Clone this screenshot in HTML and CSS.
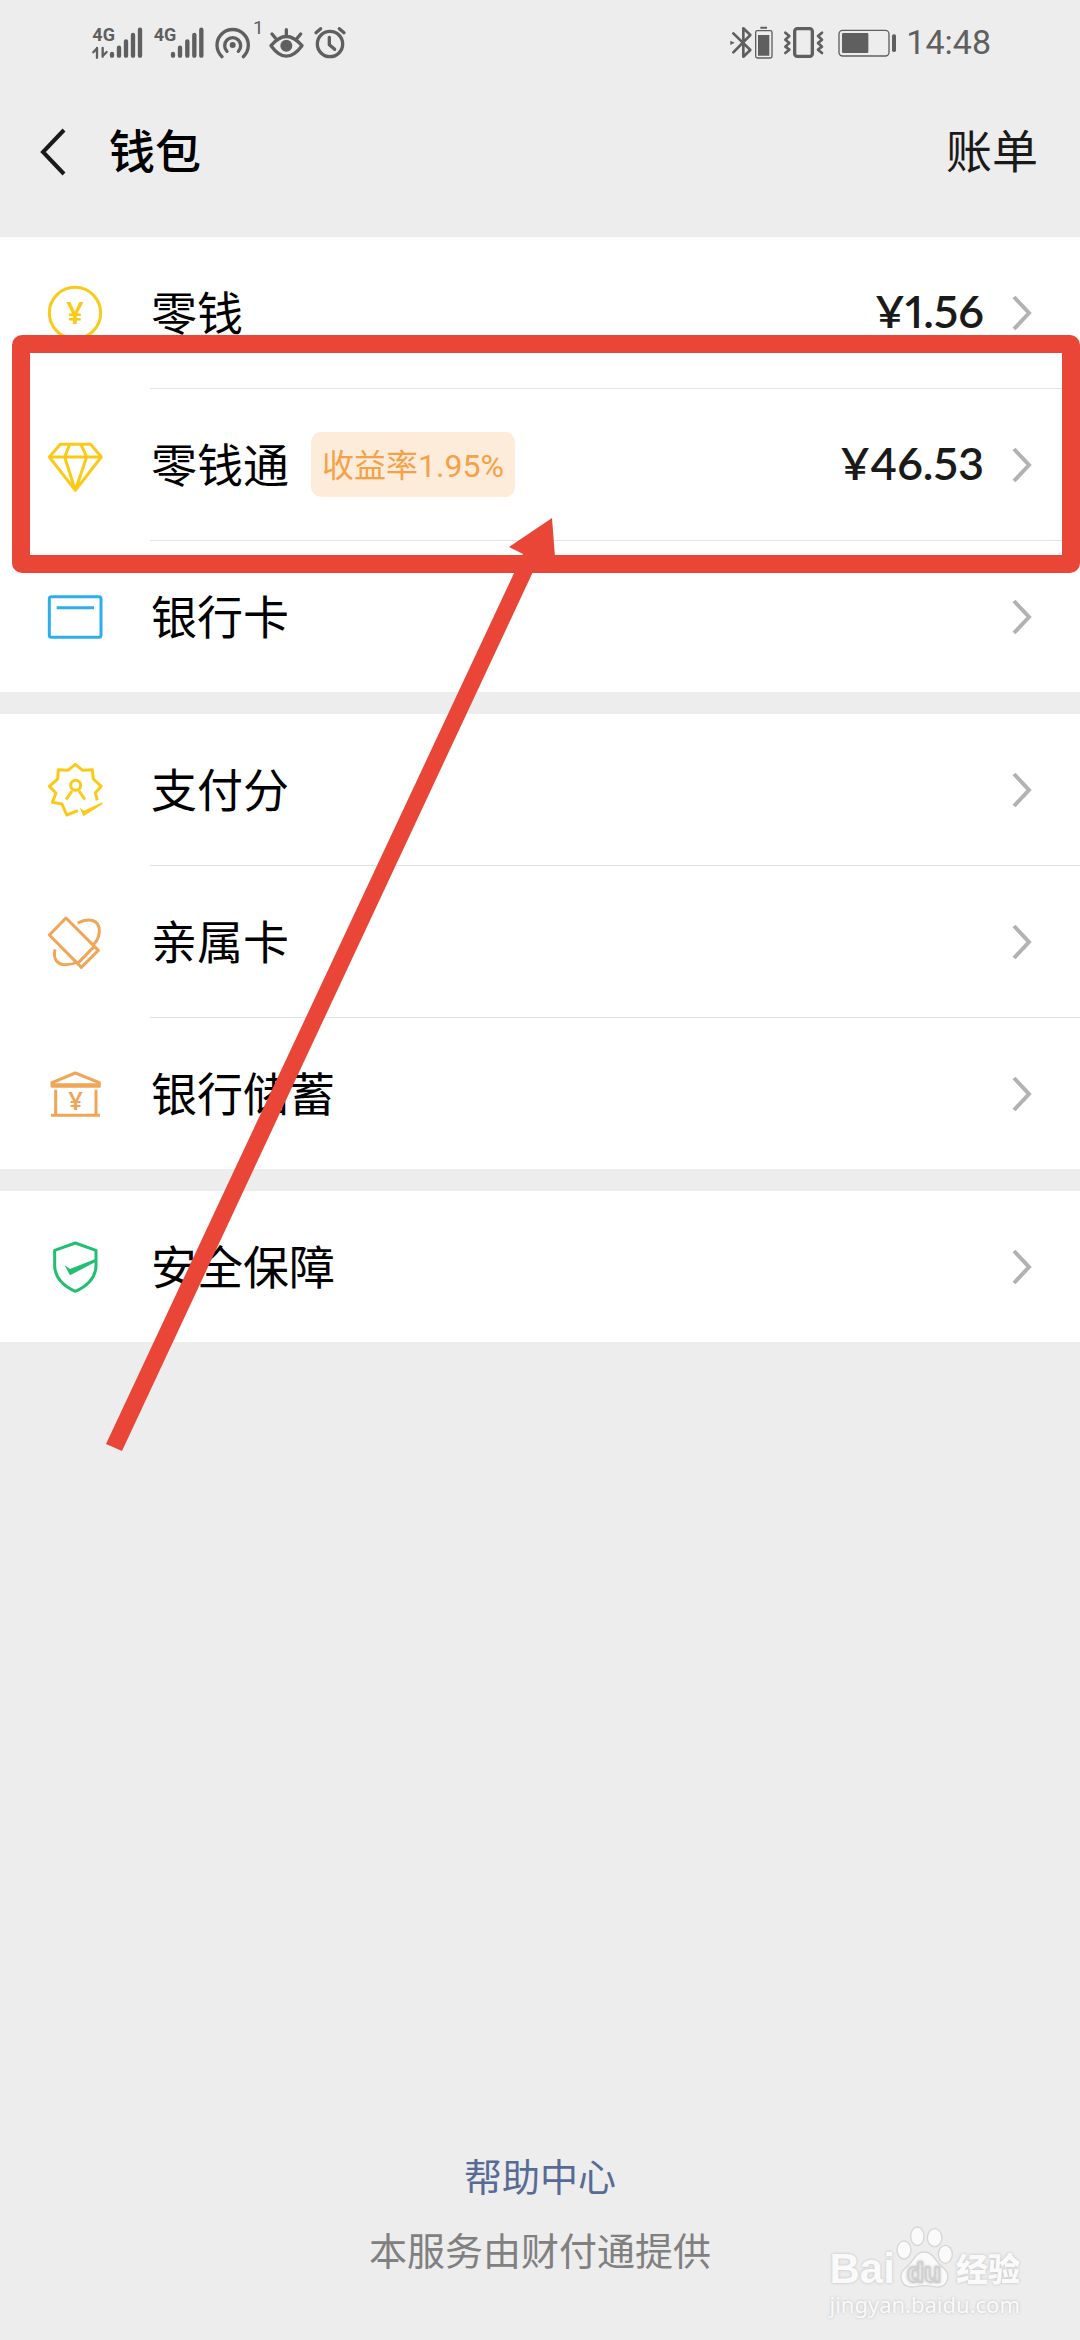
FILE: index.html
```html
<!DOCTYPE html>
<html lang="zh-CN">
<head>
<meta charset="utf-8">
<meta name="viewport" content="width=device-width, initial-scale=1">
<title>钱包</title>
<link rel="stylesheet" href="styles.css">
</head>
<body>
<div class="screen">
  <div class="status-bar">
    <div class="status-group">
      <svg class="status-icon" width="52" height="35" viewBox="36 43 156 105">
        <text class="net" x="37" y="92">4G</text>
        <path class="line" stroke-width="7" d="M51 112V141M51 113L40 125M68 112V138M68 136L80 124"/>
        <path class="line" stroke-width="13" d="M96 130V135M117 111V135M138 92V135M159 73V135M180 57V135"/>
      </svg>
      <svg class="status-icon" width="52" height="35" viewBox="216 43 156 105">
        <text class="net" x="221" y="92">4G</text>
        <path class="line" stroke-width="13" d="M279 130V135M300 111V135M322 92V135M343 73V135M364 57V135"/>
      </svg>
      <svg class="status-icon" width="50" height="35" viewBox="396 43 150 105">
        <circle cx="458" cy="103" r="9"/>
        <path class="line" stroke-width="10" d="M441 122A24 24 0 1 1 475 122M426 138A47 47 0 1 1 490 138"/>
        <text class="count" x="519" y="69">1</text>
      </svg>
      <svg class="status-icon" width="34" height="35" viewBox="570 43 102 105">
        <path class="line" stroke-width="10" d="M573 105Q619 50 666 105Q619 168 573 105ZM619 57V74M576 70L586 82M662 70L652 82"/>
        <circle cx="619" cy="105" r="18"/>
      </svg>
      <svg class="status-icon" width="36" height="35" viewBox="696 43 108 105">
        <circle class="line" stroke-width="10" cx="750" cy="100" r="38"/>
        <path class="line" stroke-width="10" d="M748 80V102L764 116M708 66L722 54M778 54L792 66"/>
      </svg>
    </div>
    <div class="status-group">
      <svg class="status-icon" width="45" height="35" viewBox="24 43 135 105">
        <path class="line" stroke-width="8" d="M37 68L88 118L67 138V53L88 73L37 125"/>
        <path d="M28 90L41 96L28 103ZM118 48H138V54H118ZM111 73H145V135H111Z"/>
        <rect class="line" stroke-width="4" x="104" y="60" width="49" height="82" rx="5"/>
      </svg>
      <svg class="status-icon" width="48" height="35" viewBox="183 43 144 105">
        <rect class="line" stroke-width="10" x="221" y="54" width="53" height="83" rx="8"/>
        <path class="line" stroke-width="8" d="M193 66L205 76L193 87L205 97L193 108L205 117L193 127M303 66L291 76L303 87L291 97L303 108L291 117L303 127"/>
      </svg>
      <svg class="status-icon" width="60" height="35" viewBox="350 43 180 105">
        <rect class="line" stroke-width="4" x="353" y="59" width="150" height="77" rx="11"/>
        <rect x="362" y="67" width="79" height="60" rx="3"/>
        <rect x="512" y="71" width="12" height="53" rx="5"/>
      </svg>
      <time class="clock">14:48</time>
    </div>
  </div>

  <header class="nav">
    <button class="back" type="button" aria-label="返回">
      <svg width="26" height="48" viewBox="0 0 26 48"><path d="M24 2L3 24L24 46"/></svg>
    </button>
    <h1 class="title">钱包</h1>
    <a class="bill" href="#">账单</a>
  </header>

  <main class="groups">
    <section class="group">
      <a class="row" href="#">
        <svg class="icon gold" viewBox="0 0 162 162">
          <circle cx="81" cy="81" r="77"/>
          <text class="yen" x="81" y="115" font-size="92">¥</text>
        </svg>
        <span class="label">零钱</span>
        <span class="amount">¥1.56</span>
        <svg class="chevron" viewBox="0 0 20 36"><path d="M2 2L17 18L2 34"/></svg>
      </a>
      <a class="row" href="#">
        <svg class="icon gold" viewBox="0 0 162 162">
          <path d="M37 19H128L160 57L82 157L4 57ZM4 57H160M65 19L50 57L82 157L116 57L99 19"/>
        </svg>
        <span class="label">零钱通</span>
        <span class="rate">收益率1.95%</span>
        <span class="amount">¥46.53</span>
        <svg class="chevron" viewBox="0 0 20 36"><path d="M2 2L17 18L2 34"/></svg>
        <span class="highlight"></span>
      </a>
      <a class="row" href="#">
        <svg class="icon blue" viewBox="0 0 162 162">
          <rect x="4" y="20" width="155" height="122" rx="6"/>
          <path d="M26 53H138"/>
        </svg>
        <span class="label">银行卡</span>
        <svg class="chevron" viewBox="0 0 20 36"><path d="M2 2L17 18L2 34"/></svg>
      </a>
    </section>

    <section class="group">
      <a class="row" href="#">
        <svg class="icon gold" viewBox="0 0 162 162">
          <path d="M148 112L142 89L160 70L136 48L133 20L104 22L82 4L60 22L31 20L29 48L4 70L24 90L13 118L42 123L56 156L90 143"/>
          <circle cx="83" cy="67" r="15"/>
          <path d="M54 110L72 84M111 110L93 84"/>
          <path class="solid" d="M95 134L108 143L163 118V124L106 160Z"/>
        </svg>
        <span class="label">支付分</span>
        <svg class="chevron" viewBox="0 0 20 36"><path d="M2 2L17 18L2 34"/></svg>
      </a>
      <a class="row" href="#">
        <svg class="icon orange" viewBox="0 0 162 162">
          <path d="M54 9L4 60L100 157L151 106ZM89 145L136 97"/>
          <path d="M89 24C120 8 154 12 154 48C154 65 147 78 136 90M21 103C14 135 30 149 52 149C65 149 78 146 88 141"/>
        </svg>
        <span class="label">亲属卡</span>
        <svg class="chevron" viewBox="0 0 20 36"><path d="M2 2L17 18L2 34"/></svg>
      </a>
      <a class="row" href="#">
        <svg class="icon orange" viewBox="0 0 162 162">
          <path d="M12 47L82 18L154 47V58H12ZM12 53H154M23 68V141M144 68V141M9 145H156"/>
          <text class="yen" x="83" y="129" font-size="77">¥</text>
        </svg>
        <span class="label">银行储蓄</span>
        <svg class="chevron" viewBox="0 0 20 36"><path d="M2 2L17 18L2 34"/></svg>
      </a>
    </section>

    <section class="group">
      <a class="row" href="#">
        <svg class="icon green" viewBox="0 0 162 162">
          <path d="M82 9L144 31V76C144 116 112 142 82 154C52 142 20 116 20 76V31Z"/>
          <path class="solid" d="M50 76L66 87L142 57V66L66 106Z"/>
        </svg>
        <span class="label">安全保障</span>
        <svg class="chevron" viewBox="0 0 20 36"><path d="M2 2L17 18L2 34"/></svg>
      </a>
    </section>
  </main>

  <footer class="footer">
    <a class="help" href="#">帮助中心</a>
    <p class="provider">本服务由财付通提供</p>
  </footer>

  <svg class="arrow" width="456" height="936" viewBox="0 0 456 936">
    <path d="M447 0L451 52L433 43L17 933L1 926L418 36L404 29Z"/>
  </svg>

  <div class="watermark">
    <div class="brand">
      <span class="bai">Bai</span>
      <svg class="paw" width="58" height="62" viewBox="282 103 174 186">
        <ellipse cx="306" cy="175" rx="21" ry="27"/>
        <ellipse cx="346" cy="134" rx="20" ry="28"/>
        <ellipse cx="398" cy="138" rx="22" ry="27"/>
        <ellipse cx="430" cy="188" rx="21" ry="27"/>
        <path d="M366 181C392 181 396 203 414 219C432 234 440 243 437 261C433 283 415 289 395 285C376 281 358 281 340 285C318 289 300 281 297 260C295 242 304 234 320 220C337 204 342 181 366 181Z"/>
        <text x="366" y="270">du</text>
      </svg>
      <span class="jingyan">经验</span>
    </div>
    <span class="site">jingyan.baidu.com</span>
  </div>
</div>
</body>
</html>
```
FILE: styles.css
```css
* {
  box-sizing: border-box;
}

body {
  margin: 0;
  background: #ededed;
  color: #000;
  font-family: Roboto, "Noto Sans CJK SC", sans-serif;
}

a {
  color: inherit;
  text-decoration: none;
}

.screen {
  position: relative;
  display: flex;
  flex-direction: column;
  min-height: 100vh;
  overflow: hidden;
}

/* Status bar */
.status-bar {
  display: flex;
  align-items: center;
  justify-content: space-between;
  height: 84px;
  padding: 0 89px 0 92px;
  color: #5f5f5f;
}

.status-group {
  display: flex;
  align-items: center;
  gap: 8px;
}

.status-icon {
  fill: currentColor;
  overflow: visible;
}

.status-icon .line {
  fill: none;
  stroke: currentColor;
  stroke-linecap: round;
  stroke-linejoin: round;
}

.net {
  font: bold 54px "Liberation Sans Narrow", Roboto, sans-serif;
}

.count {
  font: 57px Roboto, sans-serif;
}

.clock {
  font-size: 34px;
  line-height: 40px;
}

/* Title bar */
.nav {
  display: flex;
  align-items: center;
  height: 153px;
  padding: 0 42px 18px 40px;
  font-size: 46px;
  line-height: 64px;
}

.back {
  display: flex;
  padding: 0;
  border: 0;
  background: none;
}

.back path {
  fill: none;
  stroke: #1a1a1a;
  stroke-width: 4;
}

.title {
  margin: 0 auto 0 43px;
  font-size: inherit;
  font-weight: 500;
}

.bill {
  color: #1a1a1a;
}

/* List */
.groups {
  display: flex;
  flex-direction: column;
  gap: 22px;
}

.group {
  background: #fff;
}

.row {
  position: relative;
  display: flex;
  align-items: center;
  height: 151px;
  padding: 0 48px;
}

.row + .row {
  height: 152px;
  border-top: 1px solid #e2e2e2;
  border-image: linear-gradient(to right, transparent 151px, #e2e2e2 151px) 1;
}

.icon {
  flex: none;
  width: 54px;
  height: 54px;
  margin-right: 49px;
  overflow: visible;
  fill: none;
  stroke: currentColor;
  stroke-width: 9;
  stroke-linejoin: round;
}

.icon .solid,
.icon .yen {
  fill: currentColor;
  stroke: none;
}

.yen {
  font-family: "Noto Sans", sans-serif;
  font-weight: 600;
  text-anchor: middle;
}

.gold { color: #fbca18; }
.blue { color: #2daeef; }
.orange { color: #f0a656; }
.green { color: #20c072; }

.label {
  padding-top: 3px;
  font-size: 46px;
  line-height: 64px;
}

.rate {
  margin-left: 22px;
  padding: 10px 11px 6px;
  border-radius: 10px;
  background: #feecdb;
  color: #f5a148;
  font-size: 32px;
  line-height: 49px;
}

.amount {
  margin-left: auto;
  padding-bottom: 4px;
  color: #1a1a1a;
  font-family: Lato, sans-serif;
  font-size: 45px;
  font-weight: 600;
  font-variant-numeric: proportional-nums;
  line-height: 64px;
}

.chevron {
  flex: none;
  width: 20px;
  height: 36px;
  margin-left: auto;
  fill: none;
  stroke: #b2b2b2;
  stroke-width: 4;
}

.amount + .chevron {
  margin-left: 28px;
}

/* Footer */
.footer {
  display: flex;
  flex-direction: column;
  align-items: center;
  gap: 18px;
  margin-top: auto;
  padding-bottom: 60px;
  font-size: 38px;
  line-height: 56px;
}

.help {
  color: #576b95;
}

.provider {
  margin: 0;
  color: #808080;
}

/* Annotations over the list */
.highlight {
  position: absolute;
  z-index: 1;
  inset: -54px 0 -33px 12px;
  border: 18px solid #e94637;
  border-radius: 10px;
}

.arrow {
  position: absolute;
  z-index: 2;
  top: 518px;
  left: 105px;
  fill: #e94637;
}

/* Watermark */
.watermark {
  position: absolute;
  right: 60px;
  bottom: 20px;
  display: flex;
  flex-direction: column;
  color: #fafafa;
  text-shadow: 0 0 3px #bbb;
}

.brand {
  display: flex;
  align-items: flex-end;
  justify-content: space-between;
}

.bai {
  font: bold 42px/38px "Liberation Sans", sans-serif;
}

.paw {
  overflow: visible;
  fill: #fafafa;
  stroke: #d6d6d6;
  stroke-width: 4;
}

.paw text {
  fill: #fafafa;
  stroke: #cfcfcf;
  font: bold 84px "Liberation Sans", sans-serif;
  text-anchor: middle;
}

.jingyan {
  font-size: 32px;
  font-weight: 900;
  line-height: 36px;
}

.site {
  font: 22px/32px "Noto Sans", sans-serif;
}
```
